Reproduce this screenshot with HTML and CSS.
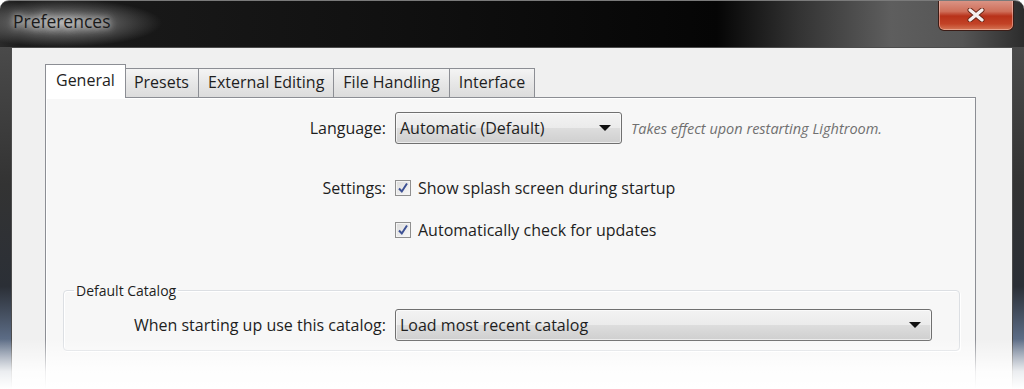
FILE: index.html
```html
<!DOCTYPE html>
<html lang="en">
<head>
    <meta charset="UTF-8">
    <title>Preferences</title>
    <link rel="stylesheet" href="styles.css">
</head>
<body>
    <div class="window">
        <div class="titlebar">
            <span class="title">Preferences</span>
            <div class="close-btn">
                <svg width="20" height="14" viewBox="0 0 20 14">
                    <path d="M4 2 L16 12 M16 2 L4 12" stroke="#6a2616" stroke-width="5" stroke-linecap="round"/>
                    <path d="M4 2 L16 12 M16 2 L4 12" stroke="#f4f0ee" stroke-width="3.2" stroke-linecap="round"/>
                </svg>
            </div>
        </div>
        <div class="frame">
            <div class="client">
                <div class="tabs">
                    <div class="tab active">General</div>
                    <div class="tab">Presets</div>
                    <div class="tab">External Editing</div>
                    <div class="tab">File Handling</div>
                    <div class="tab">Interface</div>
                </div>
                <div class="panel">
                    <div class="row row-lang">
                        <span class="label">Language:</span>
                        <div class="select select-lang">
                            <span>Automatic (Default)</span>
                            <span class="arrow"></span>
                        </div>
                        <span class="hint">Takes effect upon restarting Lightroom.</span>
                    </div>
                    <div class="row row-check first">
                        <span class="label">Settings:</span>
                        <div class="check">
                            <span class="box"><svg width="12" height="12" viewBox="0 0 12 12"><path d="M2 6.5 L4.8 9.5 L10 1.5" fill="none" stroke="#3d5194" stroke-width="2"/></svg></span>
                            Show splash screen during startup
                        </div>
                    </div>
                    <div class="row row-check">
                        <span class="label"></span>
                        <div class="check">
                            <span class="box"><svg width="12" height="12" viewBox="0 0 12 12"><path d="M2 6.5 L4.8 9.5 L10 1.5" fill="none" stroke="#3d5194" stroke-width="2"/></svg></span>
                            Automatically check for updates
                        </div>
                    </div>
                    <fieldset class="group">
                        <legend>Default Catalog</legend>
                        <div class="row row-catalog">
                            <span class="label">When starting up use this catalog:</span>
                            <div class="select select-catalog">
                                <span>Load most recent catalog</span>
                                <span class="arrow"></span>
                            </div>
                        </div>
                    </fieldset>
                </div>
            </div>
        </div>
        <div class="fade"></div>
    </div>
</body>
</html>
```

FILE: styles.css
```css
html, body {
    margin: 0;
    padding: 0;
    background: #ffffff;
}

body {
    width: 1024px;
    height: 389px;
    overflow: hidden;
    font-family: "Open Sans", "Noto Sans", sans-serif;
    color: #1e1e1e;
}

.window {
    position: relative;
    height: 388px;
    border-radius: 9px 9px 0 0;
    background: linear-gradient(90deg, #2a2a2a 0%, #1c1c1c 2%, #101010 40%, #050505 70%, #333 78%, #5e5e5e 87%, #555 94%, #2c2c2c 100%);
    border-top: 1px solid #7a7a7a;
    overflow: hidden;
}

/* title bar */
.titlebar {
    height: 46px;
    display: flex;
    justify-content: space-between;
    align-items: flex-start;
    background: radial-gradient(ellipse 100px 24px at 62px 22px, rgba(185,185,185,0.85) 0%, rgba(120,120,120,0.55) 55%, rgba(60,60,60,0) 100%);
}

.title {
    margin: 8px 0 0 13px;
    font-size: 17.5px;
    color: #1a1a1a;
    text-shadow: 0 0 6px rgba(235,235,235,0.9), 0 0 12px rgba(210,210,210,0.7);
}

.close-btn {
    width: 74px;
    height: 31px;
    margin: -2px 10px 0 0;
    border: 1px solid #3b1c16;
    border-top: none;
    border-radius: 0 0 6px 6px;
    background: linear-gradient(#dc9a8c 0%, #cf6f5a 40%, #b8321a 55%, #c24226 80%, #d67857 100%);
    box-shadow: inset 0 0 0 1px rgba(255,220,210,0.45);
    display: flex;
    align-items: center;
    justify-content: center;
}

/* frame around the client area */
.frame {
    padding: 0 11px 0 11px;
    background: linear-gradient(#4a4a4a 0%, #333 40%, #2b2f36 70%, #5b6b84 85%, #8a96a8 100%);
}

.client {
    height: 342px;
    box-sizing: border-box;
    background: #f0f0f0;
    border: 1px solid #4c4c4c;
    border-bottom: none;
    padding: 16px 0 0 33px;
    overflow: hidden;
}

/* tabs */
.tabs {
    display: flex;
    align-items: flex-end;
    position: relative;
    z-index: 1;
}

.tab {
    height: 28px;
    line-height: 27px;
    padding: 0 9px;
    font-size: 16px;
    border: 1px solid #8c8e94;
    border-bottom: none;
    border-left: none;
    background: linear-gradient(#f4f4f4, #e6e6e6 55%, #dcdcdc);
}

.tab.active {
    height: 33px;
    line-height: 30px;
    padding: 0 10px;
    border-left: 1px solid #8c8e94;
    background: #ffffff;
    margin-bottom: -1px;
    margin-right: -1px;
    position: relative;
}

.panel {
    width: 929px;
    height: 320px;
    border: 1px solid #8c8e94;
    background: #f7f7f7;
    box-shadow: inset 1px 1px 0 #fff;
    padding-top: 14px;
    font-size: 16px;
}

/* form rows */
.row {
    display: grid;
    grid-template-columns: 340px auto auto;
    column-gap: 9px;
    align-items: center;
    justify-content: start;
}

.label {
    text-align: right;
}

.row-check {
    height: 26px;
    margin-top: 16px;
}

.row-check.first {
    margin-top: 31px;
}

.check {
    display: flex;
    align-items: center;
    gap: 7px;
}

.box {
    width: 14px;
    height: 14px;
    border: 1px solid #8f8f8f;
    background: linear-gradient(135deg, #dcdcdc, #f8f8f8);
    box-shadow: inset 0 0 0 1px #f4f4f4;
    display: flex;
    align-items: center;
    justify-content: center;
}

.select {
    height: 32px;
    box-sizing: border-box;
    border: 1px solid #707070;
    border-radius: 3px;
    background: linear-gradient(#f3f3f3 0%, #ebebeb 50%, #dddddd 51%, #cfcfcf 100%);
    box-shadow: inset 0 0 0 1px rgba(255,255,255,0.6);
    display: flex;
    align-items: center;
    justify-content: space-between;
    padding: 0 10px 0 4px;
}

.select-lang {
    width: 227px;
}

.select-catalog {
    width: 537px;
}

.arrow {
    width: 0;
    height: 0;
    border-left: 6px solid transparent;
    border-right: 6px solid transparent;
    border-top: 6px solid #111;
}

.hint {
    font-size: 14.5px;
    font-style: italic;
    color: #707070;
}

/* group box */
.group {
    margin: 38px 0 0 17px;
    width: 897px;
    height: 70px;
    box-sizing: border-box;
    border: 1px solid #dcdfe3;
    border-radius: 4px;
    padding: 9px 0 0 0;
    box-shadow: 1px 1px 0 #ffffff, inset 1px 1px 0 #ffffff;
}

.group legend {
    font-size: 14px;
    padding: 0 2px;
    margin-left: 10px;
}

.group .row {
    grid-template-columns: 322px auto;
}

/* reflection fade at the bottom */
.fade {
    position: absolute;
    left: 0;
    right: 0;
    bottom: 0;
    height: 50px;
    background: linear-gradient(rgba(255,255,255,0), rgba(255,255,255,0.85) 65%, #ffffff);
}
```
